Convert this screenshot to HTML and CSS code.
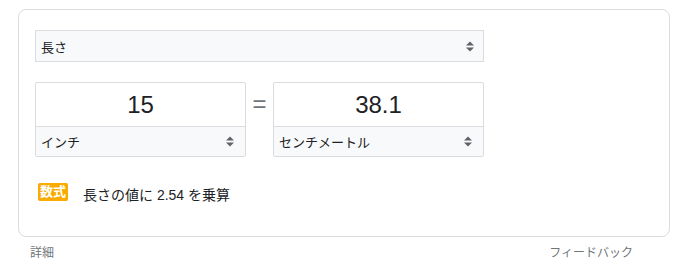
FILE: index.html
```html
<!DOCTYPE html>
<html lang="ja">
<head>
<meta charset="utf-8">
<link rel="stylesheet" href="styles.css">
</head>
<body>
<div class="card">
  <div class="select wide">
    <span>長さ</span>
    <svg class="arrows" width="8" height="11" viewBox="0 0 8 11"><path d="M0 4.5L4 0.5L8 4.5Z M0 6.5L4 10.5L8 6.5Z" fill="#5f6368"/></svg>
  </div>
  <div class="row">
    <div class="box">
      <div class="num">15</div>
      <div class="select unit">
        <span>インチ</span>
        <svg class="arrows" width="8" height="11" viewBox="0 0 8 11"><path d="M0 4.5L4 0.5L8 4.5Z M0 6.5L4 10.5L8 6.5Z" fill="#5f6368"/></svg>
      </div>
    </div>
    <div class="eq">=</div>
    <div class="box">
      <div class="num">38.1</div>
      <div class="select unit">
        <span>センチメートル</span>
        <svg class="arrows" width="8" height="11" viewBox="0 0 8 11"><path d="M0 4.5L4 0.5L8 4.5Z M0 6.5L4 10.5L8 6.5Z" fill="#5f6368"/></svg>
      </div>
    </div>
  </div>
  <div class="formula">
    <span class="badge">数式</span>
    <span class="ftext">長さの値に 2.54 を乗算</span>
  </div>
</div>
<div class="footer">
  <span>詳細</span>
  <span>フィードバック</span>
</div>
</body>
</html>
```
FILE: styles.css
```css
* { box-sizing: border-box; }
body {
  margin: 0;
  font-family: "Liberation Sans", "Noto Sans CJK JP", sans-serif;
  color: #202124;
  background: #fff;
}
.card {
  margin: 9px 0 0 18px;
  width: 652px;
  height: 228px;
  border: 1px solid #dadce0;
  border-radius: 8px;
  padding: 20px 16px 0 16px;
}
.select {
  display: flex;
  align-items: center;
  justify-content: space-between;
  background: #f8f9fa;
  font-size: 13px;
  color: #202124;
}
.wide {
  width: 449px;
  height: 32px;
  border: 1px solid #dadce0;
  padding: 0 9px 0 5px;
}
.row {
  display: flex;
  align-items: flex-start;
  margin-top: 20px;
}
.box {
  width: 211px;
  height: 75px;
  border: 1px solid #dadce0;
  border-radius: 2px;
  display: flex;
  flex-direction: column;
}
.num {
  height: 43px;
  display: flex;
  align-items: center;
  justify-content: center;
  font-size: 24px;
  color: #202124;
}
.unit {
  flex: 1;
  border-top: 1px solid #dadce0;
  padding: 0 11px 0 5px;
}
.eq {
  width: 27px;
  height: 43px;
  display: flex;
  align-items: center;
  justify-content: center;
  font-size: 24px;
  color: #70757a;
}
.formula {
  display: flex;
  align-items: center;
  margin-top: 23px;
  padding-left: 3px;
}
.badge {
  background: #f9ab00;
  color: #fff;
  font-size: 13px;
  font-weight: bold;
  width: 30px;
  height: 18px;
  line-height: 18px;
  text-align: center;
  border-radius: 2px;
}
.ftext {
  margin-left: 15px;
  font-size: 14px;
  margin-top: 4px;
}
.footer {
  display: flex;
  justify-content: space-between;
  width: 603px;
  margin: 6px 0 0 30px;
  font-size: 12px;
  color: #70757a;
}
```
